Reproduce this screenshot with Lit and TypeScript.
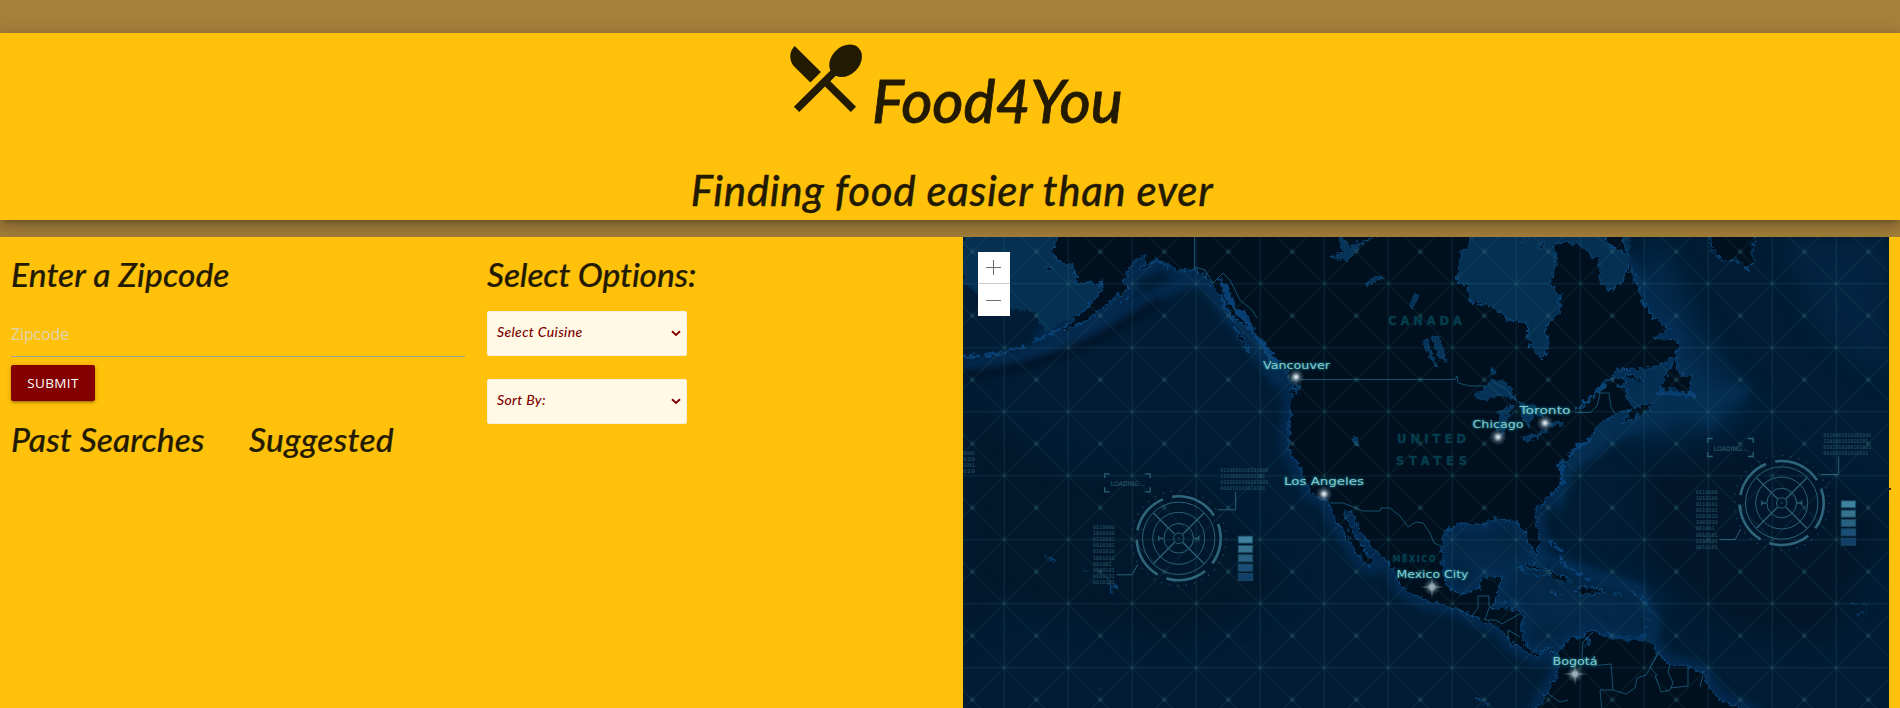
import { LitElement, html, svg, css } from "lit";
import { customElement, property } from "lit/decorators.js";

const MAINLAND =
  "M1059 230L1059 237L1052 250L1057 262L1066 263L1073 267L1077 283L1087 282L1097 285L1104 282L1097 297L1083 312L1067 325L1043 338L1050 334L1066 329L1083 323L1096 314L1110 302L1130 288L1123 282L1133 262L1145 255L1148 263L1137 270L1150 267L1153 260L1167 263L1177 270L1195 269L1207 278L1218 292L1227 313L1240 323L1250 330L1267 347L1270 360L1287 370L1288 380L1299 393L1290 387L1292 403L1289 430L1289 450L1300 468L1310 492L1327 500L1333 515L1343 532L1350 542L1363 562L1372 567L1373 562L1363 548L1353 532L1345 518L1345 510L1352 512L1358 528L1370 545L1393 568L1400 585L1417 597L1430 602L1457 608L1473 617L1487 623L1500 628L1510 642L1523 650L1537 657L1543 650L1557 653L1557 678L1547 692L1535 714L1752 714L1720 700L1710 688L1703 673L1690 667L1670 665L1658 653L1650 640L1633 640L1613 638L1600 635L1593 630L1580 637L1567 640L1558 654L1548 647L1537 652L1527 647L1522 637L1522 615L1517 609L1493 608L1502 577L1483 577L1478 590L1462 594L1448 588L1442 572L1442 545L1445 532L1460 523L1483 525L1497 518L1517 522L1525 532L1530 545L1537 555L1540 545L1537 525L1535 510L1553 493L1563 482L1558 465L1567 460L1573 450L1593 437L1595 427L1620 412L1630 410L1623 423L1650 410L1653 403L1633 407L1627 397L1627 387L1617 387L1628 382L1617 377L1607 383L1593 397L1575 411L1600 388L1617 370L1653 368L1677 355L1678 340L1653 338L1670 328L1653 317L1645 305L1638 287L1628 263L1623 280L1612 292L1600 283L1600 262L1583 247L1567 242L1553 243L1556 263L1550 283L1560 297L1560 313L1545 327L1549 347L1543 358L1530 347L1528 323L1510 320L1493 307L1470 302L1467 285L1457 282L1460 257L1472 237L1472 230Z";

const ISLANDS = [
  "M1597 230L1612 247L1627 255L1620 230Z",
  "M1709 230L1711 243L1715 253L1723 262L1737 260L1747 270L1753 263L1753 250L1757 230Z",
  "M1677 357L1667 373L1660 390L1677 390L1690 393L1692 377L1678 373Z",
  "M1517 568L1533 564L1553 572L1573 582L1560 582L1543 570Z",
  "M1575 593L1583 585L1607 592L1590 595Z",
  "M1614 593L1622 593L1621 595L1614 595Z",
  "M1550 593L1561 594L1557 596Z",
  "M1623 378L1630 374L1643 380L1640 381Z",
  "M1045 268L1052 266L1052 271L1047 271Z",
  "M1235 328L1240 333L1250 352L1239 341Z",
  "M1540 244L1544 243L1543 250L1540 250Z",
  "M1520 243L1530 236L1526 242Z",
  "M963 230L969 237L963 242Z",
];

const LAKES = [
  "M1337 232L1350 247L1377 235L1363 243L1347 260L1330 257L1345 252Z",
  "M1365 285L1373 277L1385 278L1372 283Z",
  "M1415 292L1418 297L1412 309L1411 304Z",
  "M1432 335L1438 337L1448 363L1443 362L1435 347Z",
  "M1422 340L1428 340L1430 353L1438 366L1434 364L1427 352Z",
  "M1490 371L1493 368L1495 373L1492 376Z",
  "M1473 397L1493 380L1507 383L1517 400L1500 395L1483 400Z",
  "M1500 410L1510 405L1515 407L1507 417L1503 437L1497 430Z",
  "M1520 403L1537 407L1542 417L1533 413L1528 428L1523 417Z",
  "M1522 438L1547 430L1537 438L1525 440Z",
  "M1545 425L1563 420L1560 425Z",
  "M1353 439L1356 438L1359 444L1356 446Z",
  "M1587 636L1590 640L1591 646L1586 647Z",
  "M1297 375L1300 393L1295 390Z",
];

const BORDERS =
  "M1194.500 230V267L1205 270L1213 283L1223 273L1230 280L1240 300L1252 310L1257 318M1300 379.500H1455L1457 376L1458 383L1470 386L1490 386M1493 382L1505 388L1517 402M1575 412.500H1590L1597 406L1600 393L1609 393L1611 407L1615 414M1330 503H1343L1363 511H1380L1381 508H1390L1400 516L1408 527L1416 522L1423 523L1430 533L1434 543L1443 547M1471 617L1478 608V596H1489V607L1495 609M1489 608L1485 620L1496 620L1502 624L1521 613M1508 640V630L1520 637M1593 632L1583 642L1582 657L1592 666L1611 664L1613 690L1626 694L1635 688L1637 678L1646 675L1658 654M1658 676L1654 672L1650 667L1660 650M1655 675L1661 692L1670 690L1673 683L1668 672L1670 665M1670 688L1688 686L1688 667M1700 687L1703 675M1613 690L1600 690L1602 710M1547 693L1560 702L1568 700";

const CITIES = [
  { name: "Vancouver", x: 1263, y: 369, w: 67, dx: 1296, dy: 377, star: 0 },
  { name: "Toronto", x: 1519.500, y: 414, w: 51, dx: 1545, dy: 423, star: 0 },
  { name: "Chicago", x: 1472.500, y: 428, w: 51, dx: 1498, dy: 437, star: 0 },
  { name: "Los Angeles", x: 1284, y: 484.500, w: 80, dx: 1324, dy: 494, star: 0 },
  { name: "Mexico City", x: 1396.500, y: 578, w: 72, dx: 1432, dy: 587, star: 1 },
  { name: "Bogotá", x: 1552.500, y: 664.500, w: 45, dx: 1575, dy: 674, star: 1 },
];

const REGIONS = [
  { name: "CANADA", x: 1388, y: 325, w: 74, s: 11.5 },
  { name: "UNITED", x: 1397, y: 443, w: 69, s: 11.5 },
  { name: "STATES", x: 1396, y: 465, w: 71, s: 11.5 },
  { name: "MÉXICO", x: 1392.500, y: 562, w: 43, s: 8 },
];

const SIDE_BITS = ["0110000", "1010100", "0110101", "0010101", "0101010", "1001010", "001001", "0010101", "0100101", "0010101"];
const TOP_BITS = ["0110001010101000", "110100101010101", "0101010100101001", "001010101010101"];
const EDGE_BITS = ["0000", "010", "1001", "010"];
const BARS = ["#3f83a0", "#35738f", "#28607f", "#1c4f77", "#123f68"];

const polar = (r: number, deg: number) => {
  const a = (deg * Math.PI) / 180;
  return `${(r * Math.cos(a)).toFixed(2)} ${(r * Math.sin(a)).toFixed(2)}`;
};
const arc = (r: number, a: number, b: number) => `M${polar(r, a)}A${r} ${r} 0 0 1 ${polar(r, b)}`;

@customElement("world-map")
class WorldMap extends LitElement {
  static styles = css`
    :host { display: block; background: #02182d; }
    svg { display: block; width: 926px; height: 471px; }
    .city { font: 500 10.8px "DejaVu Sans", sans-serif; fill: #86c6cd; text-shadow: 0 0 2px #1a8a96, 0 0 3px #0e6673; }
    .region { font-family: "DejaVu Sans", sans-serif; font-weight: 700; fill: #053e4d; stroke: #053e4d; stroke-width: 0.4px; }
    .bits { font: 5.5px "DejaVu Sans Mono", monospace; fill: #2a5868; }
    .loading { font: 6.5px "DejaVu Sans", sans-serif; fill: #2f6275; }
  `;

  private gauge(x: number, y: number) {
    const arcs = [[-99, -33], [-20, 37], [51, 107], [120, 178], [191, 248]];
    return svg`<g transform="translate(${x} ${y})" fill="none" stroke="#2b6077">
      <g stroke-width="2.600" stroke="#2f667c">${arcs.map(([a, b]) => svg`<path d=${arc(42, a, b)} />`)}</g>
      <circle r="36.200" /><circle r="26" /><circle r="14.800" /><circle r="5.200" />
      <circle r="0.800" fill="#2b6077" stroke="none" />
      <circle r="47.500" stroke-width="1.200" stroke-dasharray="1.200 7.090" stroke="#234f62" />
      <path d="M4 4L25.500 25.500M-4 4L-25.500 25.500M4 -4L25.500 -25.500M-4 -4L-25.500 -25.500" stroke-width="1.300" />
      <path d="M-20 -2.500V2.500M-20 0H-15.500M20 -2.500V2.500M20 0H15.500" stroke-width="1.300" />
      <path d="M39 -28.500H57V-46.500M-62 36.500H-46.500L-41 26" />
      <path d="M-69 -64.500H-74V-60M-34 -64.500H-28.500V-60M-69 -46.500H-74V-51M-34 -46.500H-28.500V-51" stroke-width="1.300" />
      <g stroke="none">
        <text class="loading" x="-68" y="-52.500" textLength="34" lengthAdjust="spacingAndGlyphs">LOADING...</text>
        ${TOP_BITS.map((t, i) => svg`<text class="bits" x="41.500" y=${-66.500 + i * 6.2} textLength=${t.length * 3} lengthAdjust="spacingAndGlyphs">${t}</text>`)}
        ${SIDE_BITS.map((t, i) => svg`<text class="bits" x="-86" y=${-9.500 + i * 6.15} textLength=${t.length * 3.15} lengthAdjust="spacingAndGlyphs">${t}</text>`)}
        ${BARS.map((c, i) => svg`<rect x="59.500" y=${-2.200 + i * 9.350} width="14.500" height="7" fill=${c} stroke="#1b4861" stroke-width="0.900" />`)}
      </g>
    </g>`;
  }

  render() {
    return html`<svg viewBox="963 237 926 471">
      <defs>
        <filter id="rough" x="963" y="230" width="926" height="490" filterUnits="userSpaceOnUse" color-interpolation-filters="sRGB">
          <feTurbulence type="fractalNoise" baseFrequency="0.200" numOctaves="3" seed="4" />
          <feDisplacementMap in="SourceGraphic" scale="9" xChannelSelector="R" yChannelSelector="G" />
        </filter>
        <filter id="soft" x="900" y="180" width="1050" height="580" filterUnits="userSpaceOnUse" color-interpolation-filters="sRGB"><feGaussianBlur stdDeviation="4" /></filter>
        <filter id="soft2" x="900" y="180" width="1050" height="580" filterUnits="userSpaceOnUse" color-interpolation-filters="sRGB"><feGaussianBlur stdDeviation="12" /></filter>
        <pattern id="grid" x="972.300" y="251.700" width="64" height="64" patternUnits="userSpaceOnUse">
          <path d="M0 0L64 64M64 0L0 64" stroke="#4a8f8f" stroke-opacity="0.120" stroke-width="1.300" />
          <path d="M0 32H64M32 0V64" stroke="#4a9a9f" stroke-opacity="0.100" stroke-width="2" />
          <circle cx="32" cy="32" r="1.400" fill="#2c6670" fill-opacity="0.400" />
          <g fill="#2c6670" fill-opacity="0.400"><circle r="2.200" /><circle cx="64" r="2.200" /><circle cy="64" r="2.200" /><circle cx="64" cy="64" r="2.200" /></g>
        </pattern>
        <radialGradient id="glow">
          <stop offset="0" stop-color="#ffffff" />
          <stop offset="0.250" stop-color="#b9cbd5" stop-opacity="0.850" />
          <stop offset="0.600" stop-color="#7590a0" stop-opacity="0.350" />
          <stop offset="1" stop-color="#7590a0" stop-opacity="0" />
        </radialGradient>
      </defs>
      <rect x="963" y="237" width="926" height="471" fill="#011c34" />
      <g filter="url(#soft2)">
        <path d="M963 400L1060 470L1200 480L1290 590L1180 640L1000 600L963 640Z" fill="#01172b" />
        <path d="M1640 470L1770 440L1889 520L1830 640L1730 630L1650 560Z" fill="#01162a" />
        <path d="M1780 240L1889 240L1889 380L1820 330Z" fill="#042340" />
        <path d="M1660 240L1700 330L1750 400L1720 430L1640 440L1600 400L1620 300Z" fill="#04294a" />
        <path d="M1500 520L1540 560L1620 580L1660 600L1650 640L1530 640L1510 600L1450 590L1440 530Z" fill="#042848" />
      </g>
      <g filter="url(#soft)">
        <path d=${MAINLAND} fill="none" stroke="#04305a" stroke-width="18" stroke-linejoin="round" opacity="0.650" />
        <path d="M963 364Q1040 360 1110 320T1200 280Q1235 320 1280 385" fill="none" stroke="#042b50" stroke-width="12" />
        <path d="M963 374Q1040 370 1110 331L1160 300" fill="none" stroke="#010f1e" stroke-width="7" />
        <path d="M1575 410L1617 370L1680 350L1712 385L1748 385L1748 395L1722 410L1713 430L1690 415L1620 440L1570 475L1560 520L1555 500Z" fill="#042e52" />
        <path d="M1510 565L1550 560L1640 590L1655 625L1645 645" fill="none" stroke="#042e54" stroke-width="10" />
      </g>
      <g filter="url(#rough)">
        <path d="M963 230H1065L1110 282L1083 312L1045 333L1035 312L1000 307L963 285Z" fill="#053052" />
        <path d="M1450 230H1630V300H1570V365H1520L1450 310Z" fill="#053052" />
        <g fill="#00101f" stroke="#0a4679" stroke-width="1.200">
          <path d=${MAINLAND} />
          ${ISLANDS.map((d) => svg`<path d=${d} />`)}
        </g>
        <g fill="#063357" stroke="#0a4372" stroke-width="0.900">${LAKES.map((d) => svg`<path d=${d} />`)}</g>
        <g fill="none" stroke="#084074" stroke-linecap="round">
          <path d="M963 356L980 357M985 355L1005 353M1010 350L1025 347M1035 342L1045 336" stroke-width="3" />
          <path d="M1220 280L1228 300L1240 315L1252 330L1265 350L1278 362M1225 285L1235 308L1247 318L1256 337L1270 350M1221 296L1232 318" stroke-width="3.500" stroke-dasharray="7 2" />
          <path d="M1150 264L1160 262L1167 267M1120 303L1128 297M1633 593L1645 600L1649 615L1647 630L1643 640" stroke-width="2.500" stroke-dasharray="3 5" />
          <path d="M1550 542L1560 550L1562 562L1575 572L1592 580" stroke-width="3" stroke-dasharray="4 5" />
          <path d="M1597 632L1625 637L1643 637M1500 603L1515 600M1523 573L1545 576" stroke-width="1.500" stroke-dasharray="6 4" />
          <path d="M1085 571L1088 571M1107 578L1115 586L1112 590L1109 584M1045 554L1048 558L1055 560M1850 602L1856 604M1865 603L1867 608M1857 614L1865 612M1100 689L1102 690M1476 698L1490 706" stroke-width="1.500" />
          <path d="M1562 463V485M1577 447L1590 440M1660 393L1695 395" stroke-width="4" stroke-dasharray="3 2" />
        </g>
      </g>
      <path d=${BORDERS} fill="none" stroke="#16506e" stroke-width="1" />
      <rect x="963" y="237" width="926" height="471" fill="url(#grid)" />
      ${REGIONS.map((r) => svg`<text class="region" x=${r.x} y=${r.y} font-size=${r.s} textLength=${r.w}>${r.name}</text>`)}
      ${this.gauge(1178.700, 538.300)} ${this.gauge(1781.700, 503)}
      ${EDGE_BITS.map((t, i) => svg`<text class="bits" x="963" y=${454.500 + i * 6.1} textLength="12" lengthAdjust="spacingAndGlyphs">${t}</text>`)}
      ${CITIES.map((c) => svg`
        <circle cx=${c.dx} cy=${c.dy} r="8.500" fill="url(#glow)" />
        ${c.star ? svg`<path d="M${c.dx - 12} ${c.dy}L${c.dx} ${c.dy - 0.7}L${c.dx + 12} ${c.dy}L${c.dx} ${c.dy + 0.7}ZM${c.dx} ${c.dy - 12}L${c.dx + 0.7} ${c.dy}L${c.dx} ${c.dy + 12}L${c.dx - 0.7} ${c.dy}Z" fill="#8d9faa" />` : null}
        <text class="city" x=${c.x} y=${c.y} textLength=${c.w} lengthAdjust="spacingAndGlyphs">${c.name}</text>`)}
    </svg>`;
  }
}

@customElement("option-box")
class OptionBox extends LitElement {
  @property() label = "";
  static styles = css`
    :host { display: flex; box-sizing: border-box; width: 200px; height: 45px; padding: 11px 5px 0 9px; justify-content: space-between;
      background: #fff9e6; border: 1px solid #f6efd9; border-radius: 2px;
      font: italic 500 14px/17px Lato, sans-serif; color: #800000; }
    .label { white-space: nowrap; letter-spacing: 0.35px; }
    .arrow { width: 10px; height: 7px; margin-top: 7px; }
  `;
  render() {
    return html`<span class="label">${this.label}</span>
      <svg class="arrow" viewBox="0 0 10 7"><path d="M1 1.200L5 5L9 1.200" fill="none" stroke="#800000" stroke-width="1.900" /></svg>`;
  }
}

@customElement("app-root")
class AppRoot extends LitElement {
  static styles = css`
    :host { display: flex; flex-direction: column; box-sizing: border-box; width: 1900px; height: 708px; overflow: hidden;
      padding-top: 33px; background: #a6803b; color: #231a02; font-family: Lato, sans-serif; }
    header { display: flex; flex-direction: column; align-items: center; height: 187px; background: #ffc10a; flex: none;
      box-shadow: 0 8px 17px 2px rgba(0,0,0,.14), 0 3px 14px 2px rgba(0,0,0,.12), 0 5px 5px -3px rgba(0,0,0,.2); }
    .brand { display: flex; height: 132px; }
    .logo { width: 90px; height: 89px; fill: #231a02; }
    h1, h2, h3 { margin: 0; font-style: italic; font-weight: 500; white-space: nowrap; -webkit-text-stroke: 0.2px #231a02; }
    h1 { width: 250px; padding: 23px 0 0 2px; box-sizing: border-box; font-size: 60px; line-height: 89px; -webkit-text-stroke-width: 0.8px; }
    h2 { padding: 0 0 0 4px; font-size: 42px; line-height: 50px; letter-spacing: 0.63px; -webkit-text-stroke-width: 0.3px; }
    h3 { padding-top: 1px; font-size: 33.600px; line-height: 39px; letter-spacing: 0.08px; }
    main { display: grid; grid-template-columns: 476px 487px 926px 11px; height: 471px; margin-top: 17px; background: #ffc10a; }
    .search, .options { padding: 17px 11px 0; }
    .field { box-sizing: border-box; height: 48px; margin-top: 15px; border-bottom: 1px solid #9e9e9e; padding: 13px 0 0;
      font: 16px/24px "Open Sans", sans-serif; letter-spacing: -0.15px; color: #ddd3b4; }
    .submit { display: block; width: 84px; height: 36px; margin-top: 8px; padding: 0; border: 0; border-radius: 2px; background: #840000; color: #fff;
      font: 13.500px/36px "Open Sans", sans-serif; letter-spacing: .35px;
      box-shadow: 0 2px 2px 0 rgba(0,0,0,.14), 0 3px 1px -2px rgba(0,0,0,.12), 0 1px 5px 0 rgba(0,0,0,.2); }
    .lists { display: grid; grid-template-columns: 238px auto; margin-top: 18px; }
    .suggested { letter-spacing: 0.3px; }
    .choices-title { letter-spacing: -0.15px; }
    .choices { display: flex; flex-direction: column; gap: 23px; margin-top: 17px; }
    .tick { width: 2px; height: 2px; margin-top: 251px; background: #3a2c05; }
    .mapbox { position: relative; }
    .zoom { position: absolute; left: 15px; top: 15px; display: grid; width: 32px; height: 64px; background: #fff; }
    .zoom svg { width: 32px; height: 32px; stroke: #6e6e6e; stroke-width: 1; }
    .zoom svg:first-child { box-shadow: inset 0 -1px #ccc; }
  `;
  render() {
    return html`
      <header>
        <div class="brand">
          <svg class="logo" viewBox="0 0 24 24" preserveAspectRatio="none"><path d="M8.100 13.340l2.830-2.830L3.910 3.500a4.008 4.008 0 0 0 0 5.660l4.190 4.180zm6.780-1.810c1.530.710 3.680.210 5.270-1.380 1.910-1.910 2.280-4.650.810-6.120-1.460-1.460-4.200-1.100-6.120.810-1.590 1.590-2.090 3.740-1.380 5.270L3.700 19.870l1.410 1.410L12 14.410l6.880 6.880 1.410-1.410L13.410 13l1.470-1.470z" /></svg>
          <h1>Food4You</h1>
        </div>
        <h2>Finding food easier than ever</h2>
      </header>
      <main>
        <section class="search">
          <h3>Enter a Zipcode</h3>
          <div class="field">Zipcode</div>
          <button class="submit">SUBMIT</button>
          <div class="lists"><h3>Past Searches</h3><h3 class="suggested">Suggested</h3></div>
        </section>
        <section class="options">
          <h3 class="choices-title">Select Options:</h3>
          <div class="choices"><option-box label="Select Cuisine"></option-box><option-box label="Sort By:"></option-box></div>
        </section>
        <div class="mapbox">
          <world-map></world-map>
          <div class="zoom">
            <svg viewBox="0 0 32 32"><path d="M8 15.500H23M15.500 8V23" /></svg>
            <svg viewBox="0 0 32 32"><path d="M8 16.500H23" /></svg>
          </div>
        </div>
        <div class="tick"></div>
      </main>`;
  }
}
